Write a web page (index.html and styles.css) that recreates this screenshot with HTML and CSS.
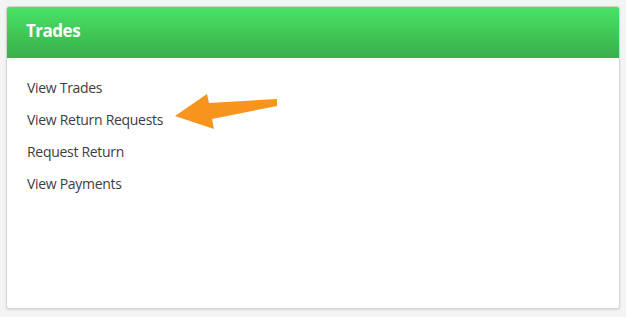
FILE: index.html
```html
<!DOCTYPE html>
<html lang="en">
<head>
    <meta charset="UTF-8">
    <title>Trades</title>
    <link rel="stylesheet" href="styles.css">
</head>
<body>
    <div class="panel">
        <div class="panel-header">
            <h2>Trades</h2>
        </div>
        <div class="panel-body">
            <ul class="links">
                <li><a href="#">View Trades</a></li>
                <li><a href="#">View Return Requests</a></li>
                <li><a href="#">Request Return</a></li>
                <li><a href="#">View Payments</a></li>
            </ul>
            <svg class="arrow" width="626" height="317" viewBox="0 0 626 317">
                <path d="M175,116 L207,94 L209,103 L277,99 L277,106 L212,119 L214,129 Z" fill="#f7941d"/>
            </svg>
        </div>
    </div>
</body>
</html>
```

FILE: styles.css
```css
* {
    box-sizing: border-box;
    margin: 0;
    padding: 0;
}

body {
    font-family: "Open Sans", Arial, sans-serif;
    background-color: #f4f4f4;
    padding: 6px;
}

.panel {
    width: 614px;
    height: 303px;
    background-color: white;
    border: 1px solid #d6d6d6;
    border-radius: 3px;
    box-shadow: 0 1px 2px rgba(0, 0, 0, 0.12);
    overflow: hidden;
}

.panel-header {
    height: 51px;
    background: linear-gradient(to bottom, #4ae264, #38af4a);
    padding: 12px 19px;
}

.panel-header h2 {
    color: white;
    font-size: 17px;
    font-weight: bold;
    letter-spacing: -0.5px;
    line-height: 24px;
}

.panel-body {
    padding: 18px 20px;
}

.links {
    list-style: none;
}

.links li {
    height: 32px;
    line-height: 22px;
}

.links a {
    color: #3d3d3d;
    font-size: 14px;
    letter-spacing: -0.3px;
    text-decoration: none;
}

.arrow {
    position: absolute;
    left: 0;
    top: 0;
    pointer-events: none;
}
```
